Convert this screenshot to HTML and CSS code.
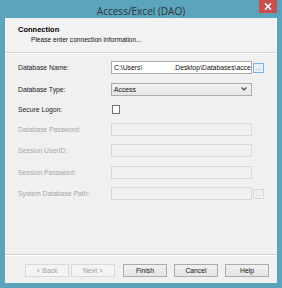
FILE: index.html
```html
<!DOCTYPE html>
<html>
<head>
<meta charset="utf-8">
<link rel="stylesheet" href="styles.css">
</head>
<body>
<div class="window">
  <div class="titlebar">
    <span class="title">Access/Excel (DAO)</span>
    <div class="close">
      <svg width="8" height="7" viewBox="0 0 8 7"><path d="M1 0.5 L7 6.5 M7 0.5 L1 6.5" stroke="#fff" stroke-width="1.6"/></svg>
    </div>
  </div>
  <div class="client">
    <div class="header">
      <div class="h-title">Connection</div>
      <div class="h-sub">Please enter connection information...</div>
    </div>
    <div class="sep"></div>
    <div class="form">
      <div class="row">
        <span class="label">Database Name:</span>
        <div class="input">C:\Users\<span class="blank"></span>.Desktop\Databases\acces</div>
        <div class="browse active">...</div>
      </div>
      <div class="row">
        <span class="label">Database Type:</span>
        <div class="select"><span>Access</span><svg width="6" height="4" viewBox="0 0 6 4"><path d="M0.5 0.5 L3 3 L5.5 0.5" fill="none" stroke="#444" stroke-width="1.2"/></svg></div>
      </div>
      <div class="row short">
        <span class="label">Secure Logon:</span>
        <div class="check"></div>
      </div>
      <div class="row">
        <span class="label disabled">Database Password:</span>
        <div class="input off"></div>
      </div>
      <div class="row">
        <span class="label disabled">Session UserID:</span>
        <div class="input off"></div>
      </div>
      <div class="row">
        <span class="label disabled">Session Password:</span>
        <div class="input off"></div>
      </div>
      <div class="row">
        <span class="label disabled">System Database Path:</span>
        <div class="input off"></div>
        <div class="browse off">...</div>
      </div>
    </div>
    <div class="sep"></div>
    <div class="buttons">
      <div class="btn off">&lt; Back</div>
      <div class="btn off">Next &gt;</div>
      <div class="btn gap">Finish</div>
      <div class="btn">Cancel</div>
      <div class="btn">Help</div>
    </div>
  </div>
</div>
</body>
</html>
```
FILE: styles.css
```css
html, body {
  margin: 0;
  padding: 0;
}
body {
  width: 282px;
  height: 288px;
  overflow: hidden;
  font-family: "Liberation Sans", Arial, sans-serif;
}
.window {
  width: 282px;
  height: 288px;
  box-sizing: border-box;
  background: #5ba4bb;
  padding: 0 5px 5px 5px;
  display: flex;
  flex-direction: column;
}
.titlebar {
  height: 18px;
  position: relative;
  display: flex;
  align-items: center;
  justify-content: center;
}
.title {
  font-family: "Open Sans", "Noto Sans", sans-serif;
  font-size: 10px;
  color: #2e3438;
  margin-top: 4px;
}
.close {
  position: absolute;
  top: 0;
  right: 0;
  width: 18px;
  height: 13px;
  background: #c74f4f;
  display: flex;
  align-items: center;
  justify-content: center;
}
.client {
  flex: 1;
  background: #f0f0f0;
  display: flex;
  flex-direction: column;
}
.header {
  height: 34px;
  box-sizing: border-box;
  padding: 7px 0 0 13px;
  background: #f2f2f2;
}
.h-title {
  font-weight: bold;
  font-size: 7.5px;
  color: #000;
  line-height: 9px;
}
.h-sub {
  font-size: 6.6px;
  color: #111;
  padding-left: 13px;
  line-height: 9px;
  margin-top: 1px;
}
.sep {
  height: 1px;
  border-top: 1px solid #d4d4d4;
  background: #fff;
}
.form {
  padding: 7px 0 0 13px;
  display: flex;
  flex-direction: column;
  gap: 8.5px;
  flex: 1;
}
.row {
  display: flex;
  align-items: center;
  height: 13px;
}
.row.short {
  height: 10px;
}
.label {
  width: 93px;
  font-size: 6.8px;
  color: #222;
}
.label.disabled {
  color: #a6a6a6;
}
.input {
  width: 141px;
  height: 13px;
  box-sizing: border-box;
  border: 1px solid #acacac;
  background: #fff;
  font-size: 6.8px;
  color: #111;
  padding-left: 2px;
  line-height: 11px;
  white-space: nowrap;
  overflow: hidden;
}
.blank {
  display: inline-block;
  width: 31px;
}
.input.off {
  background: #f0f0f0;
  border-color: #d9d9d9;
}
.browse {
  width: 11px;
  height: 10px;
  margin-left: 1px;
  margin-top: 1px;
  box-sizing: border-box;
  font-size: 6px;
  line-height: 8px;
  text-align: center;
  color: #555;
  overflow: hidden;
}
.browse.active {
  border: 1px solid #7eb4ea;
  background: #e6eef6;
}
.browse.off {
  border: 1px solid #d9d9d9;
  background: #f0f0f0;
  color: #aaa;
}
.select {
  width: 141px;
  height: 13px;
  box-sizing: border-box;
  border: 1px solid #acacac;
  background: linear-gradient(#f2f2f2, #e6e6e6);
  display: flex;
  align-items: center;
  justify-content: space-between;
  padding: 0 4px 0 2px;
  font-size: 6.8px;
  color: #111;
}
.check {
  width: 8px;
  height: 9px;
  box-sizing: border-box;
  border: 1px solid #707070;
  background: #fff;
  margin-left: 1px;
}
.buttons {
  height: 27px;
  display: flex;
  padding: 8px 0 0 20px;
  box-sizing: border-box;
  gap: 2px;
}
.btn {
  width: 44px;
  height: 13px;
  box-sizing: border-box;
  border: 1px solid #acacac;
  background: linear-gradient(#f0f0f0, #e5e5e5);
  font-size: 6.8px;
  text-align: center;
  line-height: 11px;
  color: #111;
}
.btn.off {
  border-color: #d9d9d9;
  background: #f4f4f4;
  color: #9c9c9c;
}
.btn.gap {
  margin-left: 6px;
}
.btn + .btn:not(.off):not(.gap) {
  margin-left: 5px;
}
```
